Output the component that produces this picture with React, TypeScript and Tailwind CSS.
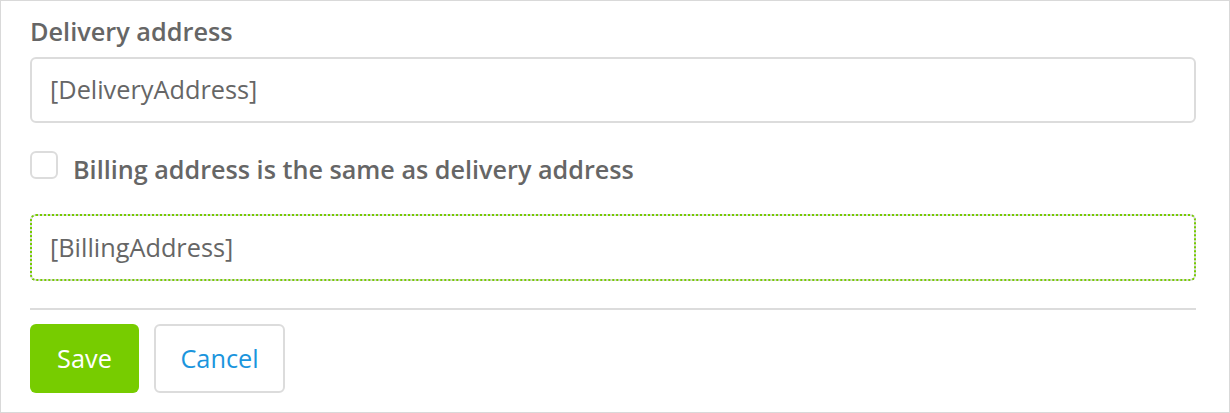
import React from "react";

export default function App() {
  return (
    <div
      className="w-[1230px] h-[413px] border border-[#d9d9d9] bg-white pl-[29px] pr-[33px] pt-[14px] box-border"
      style={{ fontFamily: '"Open Sans", sans-serif' }}
    >
      <div className="text-[25.3px] leading-[32px] font-semibold text-[#666]">Delivery address</div>
      <div className="mt-[10px] h-[66px] rounded-[6px] border-2 border-[#dcdcdc] flex items-center px-[18px] text-[25.3px] text-[#666]">
        [DeliveryAddress]
      </div>
      <div className="mt-[28px] flex items-center h-[28px]">
        <div className="w-[28px] h-[28px] rounded-[6px] border-2 border-[#dcdcdc] bg-white shrink-0" />
        <span className="ml-[15px] text-[25.2px] font-semibold text-[#666] leading-[32px] mt-[8px] whitespace-nowrap">
          Billing address is the same as delivery address
        </span>
      </div>
      <div className="mt-[35px] h-[67px] rounded-[6px] border-2 border-[#dcdcdc] outline-2 outline-dotted outline-[#76cc00] outline-offset-[-2px] flex items-center px-[18px] text-[25.3px] text-[#666]">
        [BillingAddress]
      </div>
      <div className="mt-[27px] h-[2px] bg-[#dcdcdc]" />
      <div className="mt-[14px] flex gap-[15px]">
        <button className="h-[69px] w-[109px] rounded-[6px] bg-[#77cc00] text-white text-[25.3px]">Save</button>
        <button className="h-[69px] w-[131px] rounded-[6px] border-2 border-[#dcdcdc] bg-white text-[#1b95dd] text-[25.3px]">Cancel</button>
      </div>
    </div>
  );
}
